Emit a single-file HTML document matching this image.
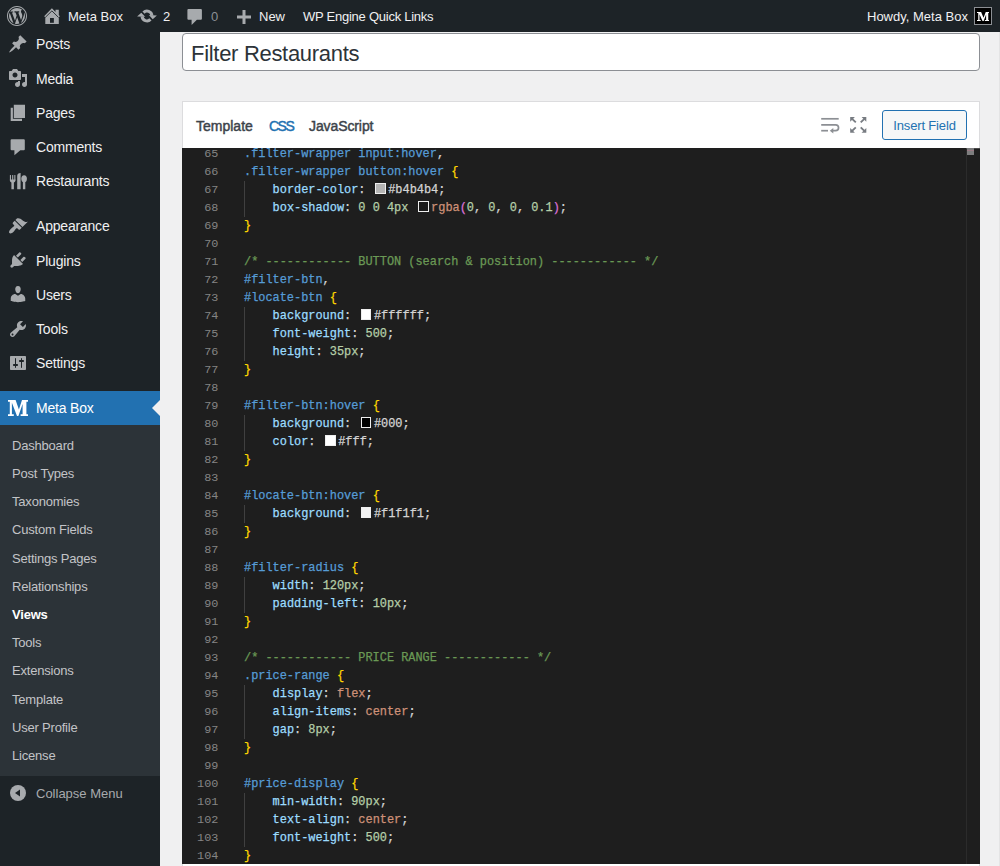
<!DOCTYPE html>
<html><head><meta charset="utf-8">
<style>
*{box-sizing:border-box;margin:0;padding:0}
html,body{width:1000px;height:866px;overflow:hidden;background:#f0f0f1;font-family:"Liberation Sans",sans-serif;position:relative}
.abs{position:absolute}
#adminbar{position:absolute;left:0;top:0;width:1000px;height:32px;background:#1d2327}
.ab{position:absolute;top:1px;height:32px;line-height:32px;font-size:13px;color:#f0f0f1;white-space:nowrap}
#edge999{position:absolute;left:999px;top:32px;width:1px;height:834px;background:#e4e4e5}
#side{position:absolute;left:0;top:32px;width:160px;height:834px;background:#1d2327}
.mi{position:absolute;left:36px;font-size:14px;letter-spacing:-0.2px;line-height:18px;color:#f0f0f1;white-space:nowrap}
.sm{position:absolute;left:12px;font-size:13px;letter-spacing:-0.2px;line-height:18px;color:#c3c4c7;white-space:nowrap}
.ico{position:absolute}
#title{position:absolute;left:182px;top:33px;width:798px;height:38px;border:1px solid #8c8f94;border-radius:4px;background:#fff;font-size:22px;color:#2c3338;padding-left:8px;line-height:40px;letter-spacing:-0.3px}
#panel{position:absolute;left:182px;top:101px;width:798px;height:780px;background:#fff;border:1px solid #dcdcde}
.tab{position:absolute;top:117px;font-size:14px;line-height:18px;color:#3c434a;-webkit-text-stroke:0.45px currentColor;white-space:nowrap}
#btn{position:absolute;left:882px;top:110px;width:85px;height:30px;border:1px solid #2271b1;border-radius:3px;background:#f6f7f7;color:#2271b1;font-size:13px;line-height:29.5px;text-align:center;letter-spacing:-0.15px}
#ed{position:absolute;left:182px;top:148px;width:798px;height:716px;background:#1e1e1e;overflow:hidden}
.ln{position:absolute;left:0;width:36.3px;text-align:right;font-family:"Liberation Mono",monospace;font-size:11.8px;line-height:18px;height:18px;color:#858585;white-space:pre}
.cl{position:absolute;left:62px;font-family:"Liberation Mono",monospace;font-size:11.92px;line-height:18px;height:18px;color:#d4d4d4;white-space:pre;-webkit-text-stroke:0.25px currentColor}
.t{color:#569cd6}.p{color:#9cdcfe}.v{color:#ce9178}.n{color:#b5cea8}.c{color:#6a9955}.b{color:#ffd700}.o{color:#da70d6}.h{color:#d4d4d4}
.sw{display:inline-block;width:10.4px;height:10.4px;border:1.3px solid #eee;margin:1.3px 2.6px 0 2.6px;vertical-align:-1px}
.guide{position:absolute;left:62px;width:1px;background:#404040}
</style></head><body>
<div id="adminbar">
<svg class="ico" style="left:7px;top:6px" width="20" height="20" viewBox="0 0 20 20"><path fill="#a7aaad" d="M20 10c0-5.52-4.48-10-10-10S0 4.48 0 10s4.48 10 10 10 10-4.48 10-10zM10 1.01c4.97 0 8.99 4.020 8.99 8.99s-4.02 8.99-8.99 8.99S1.01 14.97 1.01 10 5.03 1.01 10 1.01zM8.01 14.82L4.96 6.61c.49-.03 1.05-.08 1.05-.08.43-.05.38-1.01-.06-.99 0 0-1.290.1-2.13.1-.15 0-.33 0-.52-.01 1.44-2.17 3.9-3.6 6.7-3.6 2.09 0 3.99.79 5.41 2.09-.6-.08-1.45.35-1.45 1.42 0 .66.38 1.22.79 1.88.31.54.5 1.22.5 2.21 0 1.34-1.27 4.48-1.27 4.48l-2.71-7.5c.48-.03.75-.16.75-.16.43-.05.38-1.1-.05-1.08 0 0-1.3.11-2.14.11-.78 0-2.11-.11-2.11-.11-.43-.02-.48 1.06-.04 1.08l.84.08 1.12 3.040zm6.02 2.15L16.64 10s.67-1.69.39-3.81c.63 1.14.94 2.42.94 3.81 0 2.96-1.56 5.58-3.94 6.970zM2.68 6.77L6.5 17.25c-2.67-1.3-4.47-4.08-4.47-7.25 0-1.16.2-2.23.65-3.230zm7.45 4.53l2.29 6.25c-.75.27-1.57.42-2.42.42-.72 0-1.41-.11-2.06-.3z"/></svg>
<svg class="ico" style="left:40px;top:4px" width="24" height="24" viewBox="0 0 24 24"><path fill="#a7aaad" d="M4.15 12.2 L11.9 4.15 L15.5 7.9 L15.5 5.8 L18.8 5.8 L18.8 11.1 L19.9 12.2 L18.8 13.3 L18.8 19.9 L5.3 19.9 L5.3 13.3 Z"/><path d="M5.3 13.4 L11.9 6.9 L18.5 13.4" fill="none" stroke="#1d2327" stroke-width="0.9"/><rect x="10" y="14" width="3.85" height="4.8" fill="#1d2327"/></svg>
<div class="ab" style="left:68px">Meta Box</div>
<svg class="ico" style="left:136px;top:7px" width="22" height="18" viewBox="0 0 22 18"><g fill="none" stroke="#a7aaad" stroke-width="3.1"><path d="M7.54 5.54 A4.9 4.9 0 0 1 15.9 8.6"/><path d="M14.46 12.46 A4.9 4.9 0 0 1 6.1 9.4"/></g><g fill="#a7aaad"><path d="M12.9 8.1 L20.9 8.4 L16.7 12.2 Z"/><path d="M1.1 9.6 L9.2 9.7 L5.3 5.7 Z"/></g></svg>
<div class="ab" style="left:163px">2</div>
<svg class="ico" style="left:187px;top:8px" width="16" height="18" viewBox="0 0 16 18"><path fill="#a7aaad" d="M1.4 0.9 H13.9 Q14.9 0.9 14.9 1.9 V10.7 Q14.9 11.7 13.9 11.7 H9.9 L4.6 17 V11.7 H1.4 Q0.4 11.7 0.4 10.7 V1.9 Q0.4 0.9 1.4 0.9 Z"/></svg>
<div class="ab" style="left:211px;color:#8c8f94">0</div>
<svg class="ico" style="left:237px;top:9.5px" width="14" height="14" viewBox="0 0 14 14"><path fill="#a7aaad" d="M5.5 0 H8.5 V5.5 H14 V8.5 H8.5 V14 H5.5 V8.5 H0 V5.5 H5.5 Z"/></svg>
<div class="ab" style="left:259px">New</div>
<div class="ab" style="left:303px;letter-spacing:-0.25px">WP Engine Quick Links</div>
<div class="ab" style="left:867px">Howdy, Meta Box</div>
<div class="abs" style="left:974px;top:7px;width:18px;height:18px;border:1px solid #8c8f94;background:#000"></div>
<svg class="ico" style="left:976.8px;top:11.9px" width="12.5" height="9" viewBox="0 0 20 16" preserveAspectRatio="none"><path fill="#fff" d="M0 0 H6.6 L10.4 10.2 L14 0 H20 V1.9 H18 V14.1 H20 V16 H12.6 V14.1 H14.6 V4.5 L10.6 16 H8.8 L4 3.8 V14.1 H6 V16 H0 V14.1 H2 V1.9 H0 Z"/></svg>
</div>
<div id="side"></div>
<div class="mi" style="top:35.30px">Posts</div>
<div class="mi" style="top:69.50px">Media</div>
<div class="mi" style="top:103.70px">Pages</div>
<div class="mi" style="top:137.90px">Comments</div>
<div class="mi" style="top:172.10px">Restaurants</div>
<div class="mi" style="top:217.30px">Appearance</div>
<div class="mi" style="top:251.50px">Plugins</div>
<div class="mi" style="top:285.70px">Users</div>
<div class="mi" style="top:319.90px">Tools</div>
<div class="mi" style="top:354.10px">Settings</div>
<svg class="ico" style="left:8px;top:34.05px" width="20" height="20" viewBox="0 0 20 20"><path fill="#a7aaad" d="M10.44 3.02l1.82-1.82 6.36 6.35-1.83 1.82c-1.05-.68-2.48-.57-3.41.36l-.75.75c-.92.93-1.04 2.35-.35 3.41l-1.83 1.82-2.41-2.41-2.8 2.79c-.42.42-3.38 2.71-3.8 2.29s1.86-3.39 2.28-3.81l2.79-2.79L4.1 9.36l1.83-1.82c1.05.69 2.48.57 3.4-.36l.75-.75c.93-.92 1.05-2.35.36-3.41z"/></svg>
<svg class="ico" style="left:8px;top:68.25px" width="20" height="20" viewBox="0 0 20 20"><path fill="#a7aaad" d="M13 11V4c0-.55-.45-1-1-1h-1.67L9 1H5L3.67 3H2c-.55 0-1 .45-1 1v7c0 .55.45 1 1 1h10c.55 0 1-.45 1-1zM7 4.5c1.38 0 2.5 1.12 2.5 2.5S8.38 9.5 7 9.5 4.5 8.38 4.5 7 5.62 4.5 7 4.5zM14 6h5v10.5c0 1.38-1.12 2.5-2.5 2.5S14 17.88 14 16.5s1.12-2.5 2.5-2.5c.17 0 .34.02.5.05V9h-3V6zm-4 8.05V13h2v3.5c0 1.38-1.12 2.5-2.5 2.5S7 17.88 7 16.5 8.12 14 9.5 14c.17 0 .34.02.5.05z"/></svg>
<svg class="ico" style="left:0px;top:102.45px" width="36" height="22" viewBox="0 0 36 22"><path fill="#a7aaad" d="M13.8 2.85 H25 V15.9 H13.8 Z M10.7 5.75 H12.9 V16.7 H22 V18.9 H10.7 Z"/></svg>
<svg class="ico" style="left:0px;top:136.65px" width="36" height="22" viewBox="0 0 36 22"><path fill="#a7aaad" d="M11.6 2.25 H23.8 Q24.8 2.25 24.8 3.25 V12.25 Q24.8 13.25 23.8 13.25 H20.3 L14.4 18.15 V13.25 H11.6 Q10.6 13.25 10.6 12.25 V3.25 Q10.6 2.25 11.6 2.25 Z"/></svg>
<svg class="ico" style="left:0px;top:170.85px" width="36" height="22" viewBox="0 0 36 22"><g fill="#a7aaad"><rect x="9.9" y="4.05" width="1.1" height="5.5"/><rect x="12.15" y="4.05" width="1.1" height="5.5"/><rect x="14.3" y="4.05" width="1.1" height="5.5"/><path d="M9.9 8.6 H15.4 V9.6 Q15.4 11.1 13.9 11.4 V18.25 H11.4 V11.4 Q9.9 11.1 9.9 9.6 Z"/><path d="M17.2 18.25 V5 Q17.2 2.1 20.6 1.95 V18.25 Z"/><ellipse cx="24.1" cy="7.65" rx="2.8" ry="3.5"/><rect x="22.9" y="9.5" width="2.4" height="8.75"/></g></svg>
<svg class="ico" style="left:8px;top:216.05px" width="20" height="20" viewBox="0 0 20 20"><path fill="#a7aaad" d="M14.48 11.06L7.41 3.99l1.5-1.5c.5-.56 2.3-.47 3.51.32 1.21.8 1.43 1.28 2.91 2.1 1.18.64 2.45 1.26 4.45.85zm-.71.71L6.7 4.7 4.93 6.47c-.39.39-.39 1.02 0 1.41l1.06 1.06c.39.39.39 1.03 0 1.42-.6.6-1.43 1.11-2.21 1.69-.35.26-.7.53-1.01.84C1.43 14.23.4 16.08 1.4 17.07c.99 1 2.84-.03 4.18-1.36.31-.31.58-.66.85-1.02.57-.78 1.08-1.61 1.69-2.21.39-.39 1.02-.39 1.41 0l1.06 1.06c.39.39 1.02.39 1.41 0z"/></svg>
<svg class="ico" style="left:8px;top:250.25px" width="20" height="20" viewBox="0 0 20 20"><path fill="#a7aaad" d="M13.11 4.36L9.87 7.6 8 5.73l3.24-3.24c.35-.34 1.05-.2 1.56.32.52.51.66 1.21.31 1.55zm-8 1.77l.91-1.12 9.01 9.01-1.19.84c-.71.71-2.63 1.16-3.82 1.16H6.14L4.9 17.26c-.59.59-1.54.59-2.12 0-.59-.58-.59-1.53 0-2.12l1.24-1.24v-3.88c0-1.13.4-3.19 1.09-3.89zm7.26 3.97l3.24-3.24c.34-.35 1.04-.21 1.55.31.52.51.66 1.21.31 1.55l-3.24 3.25z"/></svg>
<svg class="ico" style="left:8px;top:284.45px" width="20" height="20" viewBox="0 0 20 20"><path fill="#a7aaad" d="M10 9.25c-2.27 0-2.73-3.44-2.73-3.44C7 4.02 7.82 2 9.97 2c2.16 0 2.98 2.02 2.71 3.81 0 0-.41 3.44-2.68 3.44zm0 2.57L12.72 10c2.39 0 4.52 2.33 4.52 4.53v2.49s-3.65 1.13-7.24 1.13c-3.65 0-7.24-1.13-7.24-1.13v-2.49c0-2.25 1.94-4.48 4.47-4.48z"/></svg>
<svg class="ico" style="left:8px;top:318.65px" width="20" height="20" viewBox="0 0 20 20"><path fill="#a7aaad" d="M16.68 9.77c-1.34 1.34-3.3 1.67-4.95.99l-5.41 6.52c-.99.99-2.59.99-3.58 0s-.99-2.59 0-3.57l6.52-5.42c-.68-1.65-.35-3.61.99-4.95 1.28-1.28 3.12-1.62 4.72-1.06l-2.89 2.89 2.82 2.82 2.86-2.87c.53 1.58.18 3.39-1.08 4.65zM3.81 16.21c.4.39 1.04.39 1.43 0 .4-.4.4-1.04 0-1.43-.39-.4-1.03-.4-1.43 0-.39.39-.39 1.03 0 1.43z"/></svg>
<svg class="ico" style="left:8px;top:352.85px" width="20" height="20" viewBox="0 0 20 20"><path fill="#a7aaad" d="M18 16V4c0-.55-.45-1-1-1H3c-.55 0-1 .45-1 1v12c0 .55.45 1 1 1h14c.55 0 1-.45 1-1zM8 11h1c.55 0 1 .45 1 1s-.45 1-1 1H8v1.5c0 .28-.22.5-.5.5s-.5-.22-.5-.5V13H6c-.55 0-1-.45-1-1s.45-1 1-1h1V5.5c0-.28.22-.5.5-.5s.5.22.5.5V11zm5-2h-1c-.55 0-1-.45-1-1s.45-1 1-1h1V5.5c0-.28.22-.5.5-.5s.5.22.5.5V7h1c.55 0 1 .45 1 1s-.45 1-1 1h-1v5.5c0 .28-.22.5-.5.5s-.5-.22-.5-.5V9z"/></svg>
<div class="abs" style="left:0;top:391.05px;width:160px;height:34.2px;background:#2271b1"></div>
<div class="abs" style="left:152px;top:400.1px;width:0;height:0;border-right:8px solid #f0f0f1;border-top:8px solid transparent;border-bottom:8px solid transparent"></div>
<svg class="ico" style="left:8px;top:400px" width="20" height="16" viewBox="0 0 20 16"><path fill="#fff" d="M0 0 H7.6 L10.9 9.6 L14 0 H20 V1.8 H18.4 V14.2 H20 V16 H12.6 V14.2 H14.6 V4 L10.4 16 H9 L3.9 2.8 V14.2 H5.8 V16 H0 V14.2 H1.8 V1.8 H0 Z"/></svg>
<div class="mi" style="top:399.05px;color:#fff">Meta Box</div>
<div class="abs" style="left:0;top:425.25px;width:160px;height:350.75px;background:#2c3338"></div>
<div class="sm" style="top:436.70px;">Dashboard</div>
<div class="sm" style="top:464.90px;">Post Types</div>
<div class="sm" style="top:493.10px;">Taxonomies</div>
<div class="sm" style="top:521.30px;">Custom Fields</div>
<div class="sm" style="top:549.50px;">Settings Pages</div>
<div class="sm" style="top:577.70px;">Relationships</div>
<div class="sm" style="top:605.90px;color:#fff;font-weight:bold">Views</div>
<div class="sm" style="top:634.10px;">Tools</div>
<div class="sm" style="top:662.30px;">Extensions</div>
<div class="sm" style="top:690.50px;">Template</div>
<div class="sm" style="top:718.70px;">User Profile</div>
<div class="sm" style="top:746.90px;">License</div>
<svg class="ico" style="left:10px;top:785px" width="16" height="16" viewBox="0 0 16 16"><circle cx="8" cy="8" r="8" fill="#a7aaad"/><path d="M10 4.5 V11.5 L5 8 Z" fill="#1d2327"/></svg>
<div class="sm" style="left:36px;top:785px;color:#a7aaad;letter-spacing:0">Collapse Menu</div>
<div id="edge999"></div>
<div id="title">Filter Restaurants</div>
<div id="panel"></div>
<div class="tab" style="left:196px">Template</div>
<div class="tab" style="left:269px;color:#2271b1;letter-spacing:-1.5px">CSS</div>
<div class="tab" style="left:309px;letter-spacing:-0.1px">JavaScript</div>
<svg class="ico" style="left:819px;top:114px" width="22" height="22" viewBox="0 0 22 22"><g fill="none" stroke="#8c8f94" stroke-width="1.7"><path d="M2.2 4.8 H19.7"/><path d="M2.2 10.8 H16.6 A2.95 2.95 0 0 1 16.6 16.7 H13.5"/><path d="M2.2 16.7 H9"/></g><path d="M10.8 16.7 L14.3 14 V19.4 Z" fill="#8c8f94"/></svg>
<svg class="ico" style="left:849px;top:116px" width="18" height="18" viewBox="0 0 18 18"><g fill="#787c82"><path d="M1.2 1 H5.9 L1.2 5.7 Z"/><path d="M17.3 1 H12.6 L17.3 5.7 Z"/><path d="M1.2 16.8 H5.9 L1.2 12.1 Z"/><path d="M17.3 16.8 H12.6 L17.3 12.1 Z"/></g><g stroke="#787c82" stroke-width="1.9"><path d="M2.6 2.4 L6.8 6.4"/><path d="M15.9 2.4 L11.7 6.4"/><path d="M2.6 15.4 L6.8 11.4"/><path d="M15.9 15.4 L11.7 11.4"/></g></svg>
<div id="btn">Insert Field</div>
<div id="ed">
<div class="ln" style="top:-3.20px">65</div>
<div class="cl" style="top:-3.20px"><span class="t">.filter-wrapper input:hover</span>,</div>
<div class="ln" style="top:14.80px">66</div>
<div class="cl" style="top:14.80px"><span class="t">.filter-wrapper button:hover</span> <span class="b">{</span></div>
<div class="ln" style="top:32.80px">67</div>
<div class="cl" style="top:32.80px">    <span class="p">border-color</span>: <span class="sw" style="background:#b4b4b4"></span><span class="h">#b4b4b4</span>;</div>
<div class="ln" style="top:50.80px">68</div>
<div class="cl" style="top:50.80px">    <span class="p">box-shadow</span>: <span class="n">0 0 4px</span> <span class="sw" style="background:rgba(0,0,0,0.1)"></span><span class="v">rgba</span><span class="o">(</span><span class="n">0</span>, <span class="n">0</span>, <span class="n">0</span>, <span class="n">0.1</span><span class="o">)</span>;</div>
<div class="ln" style="top:68.80px">69</div>
<div class="cl" style="top:68.80px"><span class="b">}</span></div>
<div class="ln" style="top:86.80px">70</div>
<div class="cl" style="top:86.80px"></div>
<div class="ln" style="top:104.80px">71</div>
<div class="cl" style="top:104.80px"><span class="c">/* ------------ BUTTON (search &amp; position) ------------ */</span></div>
<div class="ln" style="top:122.80px">72</div>
<div class="cl" style="top:122.80px"><span class="t">#filter-btn</span>,</div>
<div class="ln" style="top:140.80px">73</div>
<div class="cl" style="top:140.80px"><span class="t">#locate-btn</span> <span class="b">{</span></div>
<div class="ln" style="top:158.80px">74</div>
<div class="cl" style="top:158.80px">    <span class="p">background</span>: <span class="sw" style="background:#ffffff"></span><span class="h">#ffffff</span>;</div>
<div class="ln" style="top:176.80px">75</div>
<div class="cl" style="top:176.80px">    <span class="p">font-weight</span>: <span class="n">500</span>;</div>
<div class="ln" style="top:194.80px">76</div>
<div class="cl" style="top:194.80px">    <span class="p">height</span>: <span class="n">35px</span>;</div>
<div class="ln" style="top:212.80px">77</div>
<div class="cl" style="top:212.80px"><span class="b">}</span></div>
<div class="ln" style="top:230.80px">78</div>
<div class="cl" style="top:230.80px"></div>
<div class="ln" style="top:248.80px">79</div>
<div class="cl" style="top:248.80px"><span class="t">#filter-btn:hover</span> <span class="b">{</span></div>
<div class="ln" style="top:266.80px">80</div>
<div class="cl" style="top:266.80px">    <span class="p">background</span>: <span class="sw" style="background:#000"></span><span class="h">#000</span>;</div>
<div class="ln" style="top:284.80px">81</div>
<div class="cl" style="top:284.80px">    <span class="p">color</span>: <span class="sw" style="background:#fff"></span><span class="h">#fff</span>;</div>
<div class="ln" style="top:302.80px">82</div>
<div class="cl" style="top:302.80px"><span class="b">}</span></div>
<div class="ln" style="top:320.80px">83</div>
<div class="cl" style="top:320.80px"></div>
<div class="ln" style="top:338.80px">84</div>
<div class="cl" style="top:338.80px"><span class="t">#locate-btn:hover</span> <span class="b">{</span></div>
<div class="ln" style="top:356.80px">85</div>
<div class="cl" style="top:356.80px">    <span class="p">background</span>: <span class="sw" style="background:#f1f1f1"></span><span class="h">#f1f1f1</span>;</div>
<div class="ln" style="top:374.80px">86</div>
<div class="cl" style="top:374.80px"><span class="b">}</span></div>
<div class="ln" style="top:392.80px">87</div>
<div class="cl" style="top:392.80px"></div>
<div class="ln" style="top:410.80px">88</div>
<div class="cl" style="top:410.80px"><span class="t">#filter-radius</span> <span class="b">{</span></div>
<div class="ln" style="top:428.80px">89</div>
<div class="cl" style="top:428.80px">    <span class="p">width</span>: <span class="n">120px</span>;</div>
<div class="ln" style="top:446.80px">90</div>
<div class="cl" style="top:446.80px">    <span class="p">padding-left</span>: <span class="n">10px</span>;</div>
<div class="ln" style="top:464.80px">91</div>
<div class="cl" style="top:464.80px"><span class="b">}</span></div>
<div class="ln" style="top:482.80px">92</div>
<div class="cl" style="top:482.80px"></div>
<div class="ln" style="top:500.80px">93</div>
<div class="cl" style="top:500.80px"><span class="c">/* ------------ PRICE RANGE ------------ */</span></div>
<div class="ln" style="top:518.80px">94</div>
<div class="cl" style="top:518.80px"><span class="t">.price-range</span> <span class="b">{</span></div>
<div class="ln" style="top:536.80px">95</div>
<div class="cl" style="top:536.80px">    <span class="p">display</span>: <span class="v">flex</span>;</div>
<div class="ln" style="top:554.80px">96</div>
<div class="cl" style="top:554.80px">    <span class="p">align-items</span>: <span class="v">center</span>;</div>
<div class="ln" style="top:572.80px">97</div>
<div class="cl" style="top:572.80px">    <span class="p">gap</span>: <span class="n">8px</span>;</div>
<div class="ln" style="top:590.80px">98</div>
<div class="cl" style="top:590.80px"><span class="b">}</span></div>
<div class="ln" style="top:608.80px">99</div>
<div class="cl" style="top:608.80px"></div>
<div class="ln" style="top:626.80px">100</div>
<div class="cl" style="top:626.80px"><span class="t">#price-display</span> <span class="b">{</span></div>
<div class="ln" style="top:644.80px">101</div>
<div class="cl" style="top:644.80px">    <span class="p">min-width</span>: <span class="n">90px</span>;</div>
<div class="ln" style="top:662.80px">102</div>
<div class="cl" style="top:662.80px">    <span class="p">text-align</span>: <span class="v">center</span>;</div>
<div class="ln" style="top:680.80px">103</div>
<div class="cl" style="top:680.80px">    <span class="p">font-weight</span>: <span class="n">500</span>;</div>
<div class="ln" style="top:698.80px">104</div>
<div class="cl" style="top:698.80px"><span class="b">}</span></div>
<div class="guide" style="top:32.80px;height:36px"></div>
<div class="guide" style="top:158.80px;height:54px"></div>
<div class="guide" style="top:266.80px;height:36px"></div>
<div class="guide" style="top:356.80px;height:18px"></div>
<div class="guide" style="top:428.80px;height:36px"></div>
<div class="guide" style="top:536.80px;height:54px"></div>
<div class="guide" style="top:644.80px;height:54px"></div>
<div class="abs" style="left:784px;top:0;width:1px;height:716px;background:#2b2b2b"></div>
<div class="abs" style="left:784px;top:0;width:14px;height:1px;background:#4a4a4a"></div>
<div class="abs" style="left:785px;top:0;width:6.5px;height:7px;background:#7d7d7e"></div>
<div class="abs" style="left:785px;top:2px;width:6.5px;height:1px;background:#9a7a84"></div>
</div>
</body></html>
